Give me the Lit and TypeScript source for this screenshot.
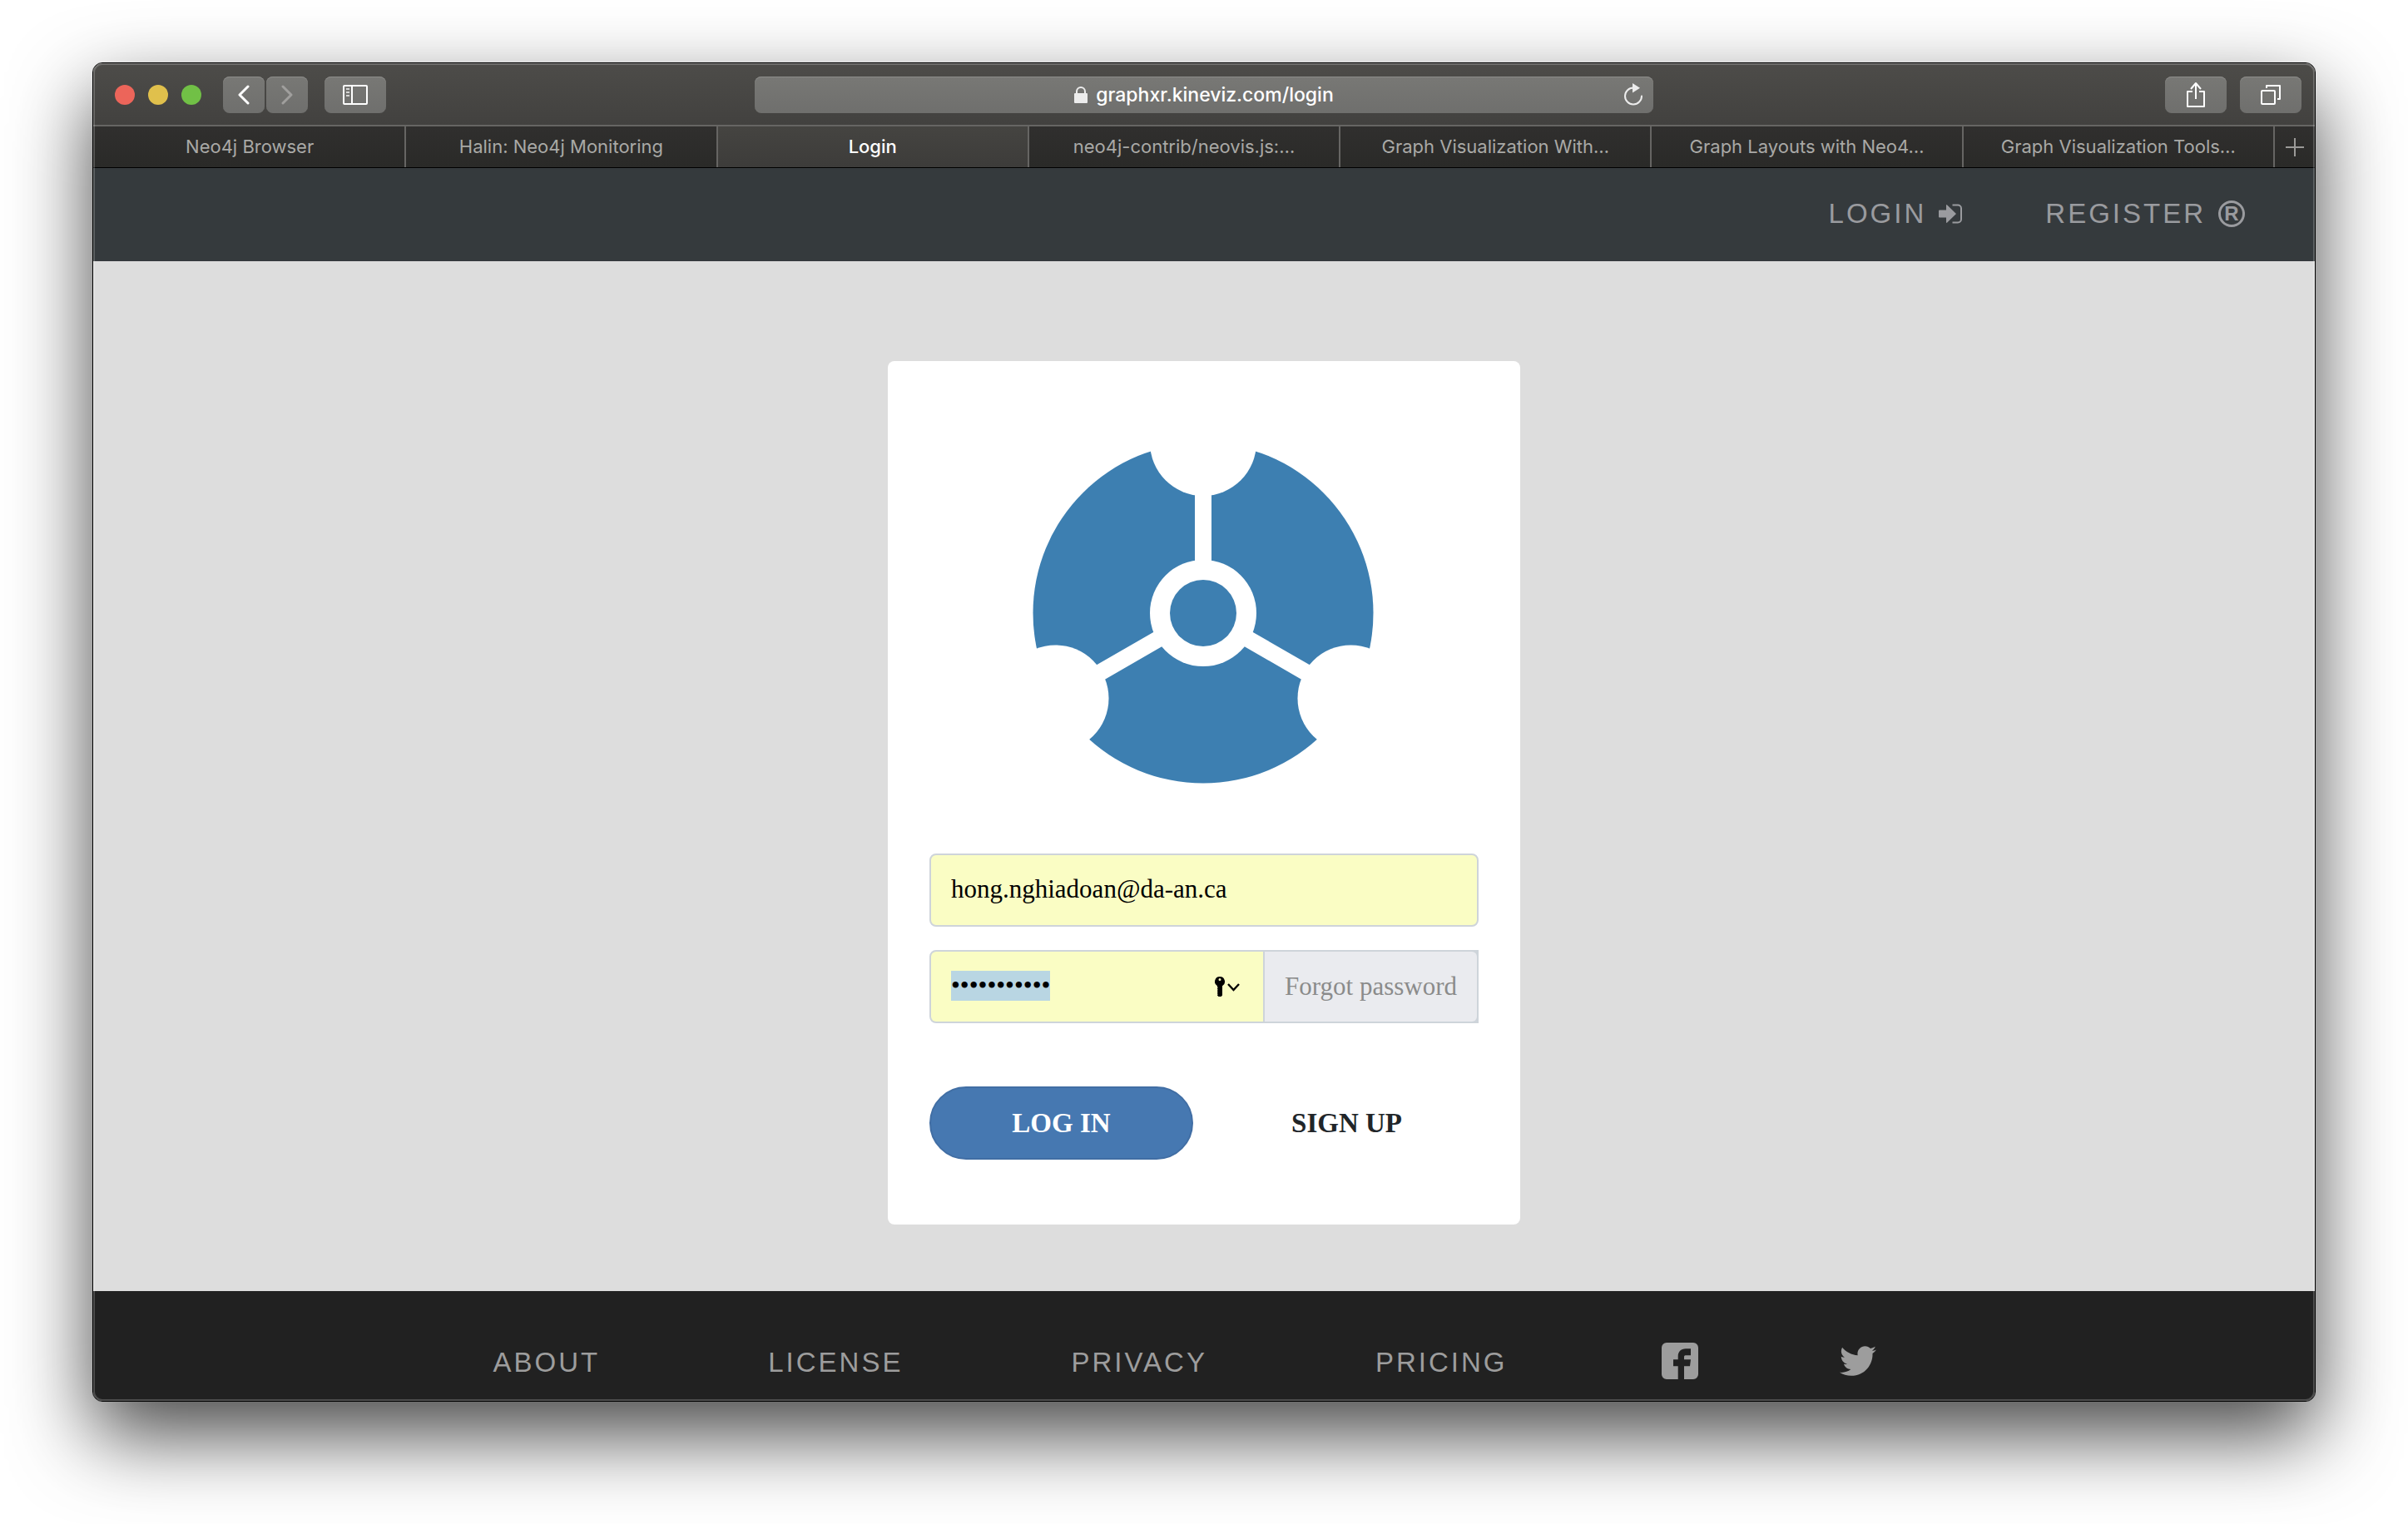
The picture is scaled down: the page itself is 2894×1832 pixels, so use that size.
import { LitElement, html, css, svg } from "lit";
import { customElement, property, query } from "lit/decorators.js";
import { classMap } from "lit/directives/class-map.js";

const icons = {
  back: svg`<svg width="16" height="24" viewBox="0 0 16 24" fill="none" stroke="#fff" stroke-width="3" stroke-linecap="round" stroke-linejoin="round"><path d="M13 2 3 12l10 10"/></svg>`,
  forward: svg`<svg width="16" height="24" viewBox="0 0 16 24" fill="none" stroke="#a09f9d" stroke-width="3" stroke-linecap="round" stroke-linejoin="round"><path d="M3 2l10 10L3 22"/></svg>`,
  sidebar: svg`<svg width="30" height="24" viewBox="0 0 30 24" fill="none" stroke="#fff" stroke-width="2"><rect x="1" y="1" width="28" height="22" rx="1"/><path d="M11 1v22"/><path stroke="#d4d4d3" d="M4 5h4M4 9h4M4 13h4"/></svg>`,
  lock: svg`<svg width="16" height="20" viewBox="0 0 16 20"><rect y="8" width="16" height="12" rx="1" fill="#ececec"/><path d="M3 9V6a5 5 0 0 1 10 0v3" fill="none" stroke="#ececec" stroke-width="2"/></svg>`,
  reload: svg`<svg width="24" height="28" viewBox="0 0 24 28"><path d="M12 5.500A10 10 0 1 0 22 15.500" fill="none" stroke="#ececec" stroke-width="2" stroke-linecap="round"/><path d="M11 0l9 5.800-9 5.700z" fill="#ececec"/></svg>`,
  share: svg`<svg width="24" height="32" viewBox="0 0 24 32" fill="none" stroke="#fff" stroke-width="2" stroke-linejoin="round"><path d="M8 12H2v18h20V12h-6M12 21V3M6 9l6-7 6 7"/></svg>`,
  overview: svg`<svg width="26" height="26" viewBox="0 0 26 26" fill="none" stroke="#fff" stroke-width="2" stroke-linejoin="round"><rect x="2" y="8" width="16" height="16" rx="1"/><path d="M8 5V2h16v16h-3"/></svg>`,
  plus: svg`<svg width="22" height="22" viewBox="0 0 22 22" stroke="#9b9a98" stroke-width="2"><path d="M11 0v22M0 11h22"/></svg>`,
  signIn: svg`<svg width="28" height="24" viewBox="0 0 28 24"><path d="M1 7.500h8V2q0-1.500 1.200-.5L21 12 10.200 22.500Q9 23.500 9 22v-5.500H1q-1 0-1-1v-7q0-1 1-1z" fill="currentColor"/><path d="M16.500 1.500H23a4 4 0 0 1 4 4v13a4 4 0 0 1-4 4h-6.500" fill="none" stroke="currentColor" stroke-width="2"/></svg>`,
  key: svg`<svg width="30" height="24" viewBox="0 0 30 24"><path fill-rule="evenodd" d="M6 0a6 6 0 0 0-3 11.200V12.500l.8.8-.8.8v1l.8.8-.8.8v1l.8.8-.8.8v1l.8.8-.8.8V22.500L4.500 24H7.500L9 22.500V11.200A6 6 0 0 0 6 0zM6 2a1.500 1.500 0 1 1 0 3 1.500 1.500 0 0 1 0-3z"/><path d="M16 9l6.500 7L29 9" fill="none" stroke="#000" stroke-width="2.400"/></svg>`,
  facebook: svg`<svg width="44" height="44" viewBox="0 0 44 44" fill="currentColor"><path d="M6 0h32a6 6 0 0 1 6 6v32a6 6 0 0 1-6 6H27V28.300h7l1-8h-8v-3.500q0-1.500 1.500-1.500H35v-8h-6c-6 0-9.300 3.700-9.300 9.300v3.700H14v8h5.700V44H6a6 6 0 0 1-6-6V6a6 6 0 0 1 6-6z"/></svg>`,
  twitter: svg`<svg width="44" height="44" viewBox="0 0 512 512" fill="currentColor"><path d="M459.370 151.716c.325 4.548.325 9.097.325 13.645 0 138.720-105.583 298.558-298.558 298.558-59.452 0-114.680-17.219-161.137-47.106 8.447.974 16.568 1.299 25.340 1.299 49.055 0 94.213-16.568 130.274-44.832-46.132-.975-84.792-31.188-98.112-72.772 6.498.974 12.995 1.624 19.818 1.624 9.421 0 18.843-1.300 27.614-3.573-48.081-9.747-84.143-51.980-84.143-102.985v-1.299c13.969 7.797 30.214 12.670 47.431 13.319-28.264-18.843-46.781-51.005-46.781-87.391 0-19.492 5.197-37.360 14.294-52.954 51.655 63.675 129.300 105.258 216.365 109.807-1.624-7.797-2.599-15.918-2.599-24.040 0-57.828 46.782-104.934 104.934-104.934 30.213 0 57.502 12.670 76.670 33.137 23.715-4.548 46.456-13.320 66.599-25.340-7.798 24.366-24.366 44.833-46.132 57.827 21.117-2.273 41.584-8.122 60.426-16.243-14.292 20.791-32.161 39.308-52.628 54.253z"/></svg>`,
  logo: svg`<svg width="410" height="410" viewBox="-205 -205 410 410" role="img" aria-label="GraphXR">
    <circle r="204.500" fill="#3d7fb1"/>
    <g fill="#fff" stroke="#fff">
      <circle r="64" stroke="none"/>
      <g stroke-width="20"><path d="M0 0V-150M0 0l-130 75M0 0l130 75"/></g>
      <g stroke="none"><circle cy="-205" r="64"/><circle cx="-177.500" cy="102.500" r="64"/><circle cx="177.500" cy="102.500" r="64"/></g>
    </g>
    <circle r="40" fill="#3d7fb1"/>
  </svg>`,
};

const shared = css`
  :host, * { box-sizing: border-box; }
  button, input { font: inherit; margin: 0; padding: 0; border: 0; background: none; color: inherit; }
  a { color: inherit; text-decoration: none; }
  svg { display: block; }
`;

@customElement("browser-toolbar")
export class BrowserToolbar extends LitElement {
  static styles = [shared, css`
    :host {
      display: grid;
      grid-template-columns: 1fr minmax(0, 1080px) 1fr;
      align-items: center;
      height: 76px;
      padding: 2px 16px 0;
      border-bottom: 2px solid #666563;
      background: linear-gradient(#4d4c49, #42413f);
      font-family: Inter, Roboto, sans-serif;
    }
    .group { display: flex; align-items: center; }
    .end { justify-content: flex-end; gap: 16px; }
    .lights { display: flex; gap: 16px; padding: 0 26px 0 10px; }
    .light { width: 24px; height: 24px; border-radius: 50%; }
    .close { background: #ec655a; }
    .minimize { background: #e0c04c; }
    .zoom { background: #71c046; }
    .history { display: flex; gap: 2px; margin-right: 20px; }
    .tool, .address {
      height: 44px;
      border-radius: 8px;
      background: linear-gradient(#787875, #6f6f6d);
      box-shadow: inset 0 1px #8c8c89;
    }
    .tool { display: flex; align-items: center; justify-content: center; width: 74px; }
    .step { width: 50px; }
    .address {
      display: grid;
      grid-template-columns: 48px 1fr 48px;
      align-items: center;
      justify-items: center;
    }
    .url { grid-column: 2; display: flex; align-items: center; gap: 10px; color: #fff; font-size: 23px; line-height: 32px; font-weight: 500; }
  `];

  render() {
    return html`
      <div class="group">
        <div class="lights">
          <button class="light close" aria-label="Close"></button>
          <button class="light minimize" aria-label="Minimize"></button>
          <button class="light zoom" aria-label="Zoom"></button>
        </div>
        <div class="history">
          <button class="tool step" aria-label="Back">${icons.back}</button>
          <button class="tool step" aria-label="Forward">${icons.forward}</button>
        </div>
        <button class="tool" aria-label="Sidebar">${icons.sidebar}</button>
      </div>
      <div class="address">
        <div class="url">${icons.lock}<span>graphxr.kineviz.com/login</span></div>
        <button aria-label="Reload">${icons.reload}</button>
      </div>
      <div class="group end">
        <button class="tool" aria-label="Share">${icons.share}</button>
        <button class="tool" aria-label="Show all tabs">${icons.overview}</button>
      </div>`;
  }
}

@customElement("browser-tabs")
export class BrowserTabs extends LitElement {
  @property({ type: Array }) tabs: string[] = [];
  @property() current = "";

  static styles = [shared, css`
    :host {
      display: flex;
      height: 50px;
      padding-left: 2px;
      border-bottom: 1px solid #000;
      background: linear-gradient(#302f2e, #2a2a28);
      color: #a9a9a6;
      font-family: Inter, Roboto, sans-serif;
      font-size: 22px;
      line-height: 28px;
    }
    .tab { flex: 1 1 0; min-width: 0; padding-bottom: 2px; border-right: 2px solid #666563; }
    .active { background: linear-gradient(#454441, #3d3c3a); color: #fff; font-weight: 500; }
    .add { display: flex; align-items: center; justify-content: center; width: 48px; }
  `];

  render() {
    return html`
      ${this.tabs.map((t) => html`<button class=${classMap({ tab: true, active: t === this.current })}>${t}</button>`)}
      <button class="add" aria-label="New tab">${icons.plus}</button>`;
  }
}

@customElement("login-card")
export class LoginCard extends LitElement {
  @query("#password") private password!: HTMLInputElement;

  static styles = [shared, css`
    :host {
      display: block;
      width: 760px;
      max-width: 100%;
      padding: 98px 50px 78px;
      border-radius: 8px;
      background: #fff;
      font-family: Georgia, "Liberation Serif", serif;
      font-size: 31px;
      line-height: 36px;
    }
    .logo { display: flex; justify-content: center; margin-bottom: 84px; padding-right: 2px; }
    .fields { display: grid; grid-template-columns: minmax(0, 1fr); gap: 28px; margin-bottom: 76px; }
    .field { display: flex; height: 88px; border: 2px solid #ced4da; border-radius: 8px; background: #fafdc4; }
    .field input { flex: 1; min-width: 0; padding: 0 24px 2px; outline: none; color: #000; }
    .field input::selection { background: #b9d6e3; color: #000; }
    .split { border-radius: 8px 0 0 8px; background: #ced4da; }
    .secret { display: flex; flex: 1; min-width: 0; padding-right: 28px; border-radius: 6px 0 0 6px; background: #fafdc4; }
    .forgot {
      display: flex;
      align-items: center;
      margin-left: 2px;
      padding: 0 24px;
      border-radius: 0 6px 6px 0;
      background: #eaebef;
      color: #8b8b8b;
      white-space: nowrap;
    }
    .actions { display: grid; grid-template-columns: 1fr 1fr; gap: 26px; }
    .action { height: 88px; border-radius: 44px; color: #212529; font-size: 33px; font-weight: 700; }
    .primary { border: 2px solid #416ea4; background: #4678b1; color: #fff; }
  `];

  firstUpdated() {
    this.password.focus();
    this.password.select();
  }

  render() {
    return html`
      <div class="logo">${icons.logo}</div>
      <form @submit=${(e: Event) => e.preventDefault()}>
        <div class="fields">
          <div class="field">
            <input id="email" type="email" aria-label="Email" value="hong.nghiadoan@da-an.ca">
          </div>
          <div class="field split">
            <div class="secret">
              <input id="password" type="password" aria-label="Password" value="00000000000">
              <button type="button" aria-label="Saved passwords">${icons.key}</button>
            </div>
            <a class="forgot" href="#forgot">Forgot password</a>
          </div>
        </div>
        <div class="actions">
          <button class="action primary" type="submit">LOG IN</button>
          <button class="action" type="button">SIGN UP</button>
        </div>
      </form>`;
  }
}

@customElement("app-root")
export class AppRoot extends LitElement {
  static styles = [shared, css`
    :host {
      display: flex;
      min-height: 100vh;
      padding: 75px 111px 147px;
      background: #fff;
      overflow: hidden;
      font-family: "Liberation Sans", Arial, sans-serif;
    }
    .window {
      position: relative;
      display: flex;
      flex: 1;
      flex-direction: column;
      min-width: 0;
      border: 1px solid #000;
      border-radius: 12px;
      overflow: hidden;
      background: #ddd;
      box-shadow: 0 40px 96px rgba(0, 0, 0, 0.72);
    }
    .window::after {
      content: "";
      position: absolute;
      inset: 0;
      border: 2px solid rgba(255, 255, 255, 0.2);
      border-radius: 11px;
      pointer-events: none;
    }
    .nav, .footer { font-size: 33px; line-height: 40px; letter-spacing: 3px; }
    .nav {
      display: flex;
      justify-content: flex-end;
      gap: 100px;
      padding: 35px 84px 37px;
      background: #353a3d;
      color: #9a9b9f;
    }
    .nav a { display: flex; align-items: center; gap: 15px; }
    .registered {
      display: flex;
      align-items: center;
      justify-content: center;
      width: 32px;
      height: 32px;
      border: 3px solid currentColor;
      border-radius: 50%;
      font-size: 24px;
      line-height: 24px;
      font-weight: 700;
      letter-spacing: 0;
    }
    .content { display: flex; flex: 1; justify-content: center; align-items: flex-start; padding: 120px 24px 80px; }
    .footer {
      display: flex;
      align-items: center;
      justify-content: center;
      padding: 62px 62px 26px 0;
      background: #212121;
      color: #9d9d9d;
    }
    .footer a { padding: 4px 101px 0; }
    .footer .social { padding: 0 85px; }
  `];

  private tabs = [
    "Neo4j Browser",
    "Halin: Neo4j Monitoring",
    "Login",
    "neo4j-contrib/neovis.js:…",
    "Graph Visualization With…",
    "Graph Layouts with Neo4…",
    "Graph Visualization Tools…",
  ];

  render() {
    return html`
      <div class="window">
        <browser-toolbar></browser-toolbar>
        <browser-tabs .tabs=${this.tabs} current="Login"></browser-tabs>
        <nav class="nav">
          <a href="#login"><span>LOGIN</span>${icons.signIn}</a>
          <a href="#register"><span>REGISTER</span><span class="registered">R</span></a>
        </nav>
        <main class="content"><login-card></login-card></main>
        <footer class="footer">
          ${["ABOUT", "LICENSE", "PRIVACY", "PRICING"].map((t) => html`<a href="#${t.toLowerCase()}">${t}</a>`)}
          <a class="social" href="#facebook" aria-label="Facebook">${icons.facebook}</a>
          <a class="social" href="#twitter" aria-label="Twitter">${icons.twitter}</a>
        </footer>
      </div>`;
  }
}
